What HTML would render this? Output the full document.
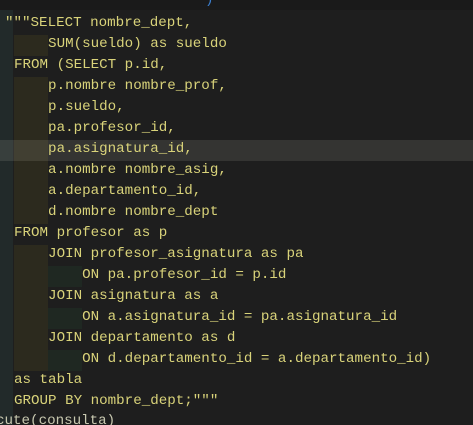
<!DOCTYPE html><html><head><style>
html,body{margin:0;width:473px;height:425px;overflow:hidden}
body{background:#1e1e1e;position:relative;font-family:"Liberation Mono",monospace;font-size:14.2px;color:#d9d37a}
#w{position:absolute;left:0;top:0;width:473px;height:425px;overflow:hidden}
.g{position:absolute;left:0;top:0;width:13px;height:425px;background:#222a2a}
.b{position:absolute}
.l{position:absolute;left:0;height:21px;line-height:21px;white-space:pre}
</style></head><body><div id="w">
<div class="g"></div>
<div class="b" style="left:0;top:0;width:473px;height:10px;background:#1a1a1a"></div>
<div class="l" style="top:-10px;left:14px;color:#555">-----------------------</div>
<div class="l" style="top:-10px;left:205px;color:#3b7fd0">)</div>
<div class="b" style="left:14px;top:35px;width:34px;height:21px;background:#2c2a1e"></div>
<div class="b" style="left:14px;top:77px;width:34px;height:147px;background:#2c2a1e"></div>
<div class="b" style="left:14px;top:245px;width:34px;height:126px;background:#2c2a1e"></div>
<div class="b" style="left:48px;top:266px;width:34px;height:21px;background:#1f2822"></div>
<div class="b" style="left:48px;top:308px;width:34px;height:21px;background:#1f2822"></div>
<div class="b" style="left:48px;top:350px;width:34px;height:21px;background:#1f2822"></div>
<div class="b" style="left:0;top:140px;width:473px;height:21px;background:rgba(255,255,240,0.1)"></div>
<div class="l" style="top:13px;left:5px">"""SELECT nombre_dept,</div>
<div class="l" style="top:34px;left:14px">    SUM(sueldo) as sueldo</div>
<div class="l" style="top:55px;left:14px">FROM (SELECT p.id,</div>
<div class="l" style="top:76px;left:14px">    p.nombre nombre_prof,</div>
<div class="l" style="top:97px;left:14px">    p.sueldo,</div>
<div class="l" style="top:118px;left:14px">    pa.profesor_id,</div>
<div class="l" style="top:139px;left:14px">    pa.asignatura_id,</div>
<div class="l" style="top:160px;left:14px">    a.nombre nombre_asig,</div>
<div class="l" style="top:181px;left:14px">    a.departamento_id,</div>
<div class="l" style="top:202px;left:14px">    d.nombre nombre_dept</div>
<div class="l" style="top:223px;left:14px">FROM profesor as p</div>
<div class="l" style="top:244px;left:14px">    JOIN profesor_asignatura as pa</div>
<div class="l" style="top:265px;left:14px">        ON pa.profesor_id = p.id</div>
<div class="l" style="top:286px;left:14px">    JOIN asignatura as a</div>
<div class="l" style="top:307px;left:14px">        ON a.asignatura_id = pa.asignatura_id</div>
<div class="l" style="top:328px;left:14px">    JOIN departamento as d</div>
<div class="l" style="top:349px;left:14px">        ON d.departamento_id = a.departamento_id)</div>
<div class="l" style="top:370px;left:14px">as tabla</div>
<div class="l" style="top:391px;left:14px">GROUP BY nombre_dept;"""</div>
<div class="l" style="top:411px;left:-4px;color:#c8c8b0">cute(consulta)</div>
</div></body></html>
